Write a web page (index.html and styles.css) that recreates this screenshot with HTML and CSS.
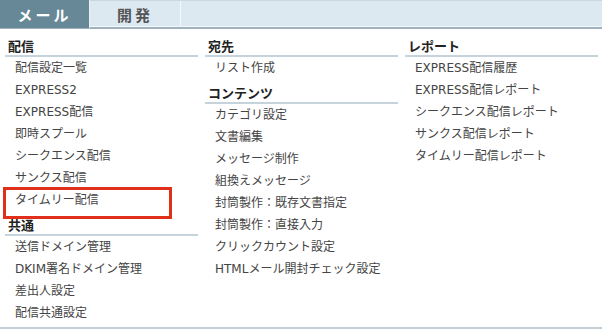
FILE: index.html
```html
<!DOCTYPE html>
<html lang="ja">
<head>
    <meta charset="UTF-8">
    <title>メニュー</title>
    <link rel="stylesheet" href="styles.css">
</head>
<body>
    <!-- Tabs -->
    <div class="tabs">
        <div class="tab active">メール</div>
        <div class="tab">開発</div>
    </div>

    <!-- Menu columns -->
    <div class="menu">
        <div class="column">
            <div class="heading">配信</div>
            <ul>
                <li>配信設定一覧</li>
                <li>EXPRESS2</li>
                <li>EXPRESS配信</li>
                <li>即時スプール</li>
                <li>シークエンス配信</li>
                <li>サンクス配信</li>
                <li class="marked">タイムリー配信</li>
            </ul>
            <div class="heading">共通</div>
            <ul>
                <li>送信ドメイン管理</li>
                <li>DKIM署名ドメイン管理</li>
                <li>差出人設定</li>
                <li>配信共通設定</li>
            </ul>
        </div>

        <div class="column">
            <div class="heading">宛先</div>
            <ul>
                <li>リスト作成</li>
            </ul>
            <div class="heading">コンテンツ</div>
            <ul>
                <li>カテゴリ設定</li>
                <li>文書編集</li>
                <li>メッセージ制作</li>
                <li>組換えメッセージ</li>
                <li>封筒製作：既存文書指定</li>
                <li>封筒製作：直接入力</li>
                <li>クリックカウント設定</li>
                <li>HTMLメール開封チェック設定</li>
            </ul>
        </div>

        <div class="column">
            <div class="heading">レポート</div>
            <ul>
                <li>EXPRESS配信履歴</li>
                <li>EXPRESS配信レポート</li>
                <li>シークエンス配信レポート</li>
                <li>サンクス配信レポート</li>
                <li>タイムリー配信レポート</li>
            </ul>
        </div>
    </div>
</body>
</html>
```

FILE: styles.css
```css
/* Basic Reset */
* {
    margin: 0;
    padding: 0;
    box-sizing: border-box;
}

body {
    font-family: "DejaVu Sans", "Noto Sans CJK JP", sans-serif;
    font-size: 12px;
    color: #444;
    background-color: white;
    width: 602px;
    height: 331px;
    overflow: hidden;
}

/* Tab bar */
.tabs {
    display: flex;
    height: 29px;
    background-color: #dce9f1;
    border-top: 1px solid #c8d9e2;
    border-bottom: 2px solid #9fb2bd;
    box-shadow: inset 0 -1px 0 #f2f7fa;
}

.tab {
    width: 91px;
    display: flex;
    justify-content: center;
    align-items: center;
    font-family: "Noto Sans CJK JP", sans-serif;
    font-size: 15px;
    font-weight: bold;
    letter-spacing: 3px;
    color: #555;
    border-right: 1px solid #f4f8fb;
}

.tab.active {
    width: 90px;
    background-color: #668897;
    color: white;
    border-right: 1px solid #e9f1f5;
    margin-top: -1px;
    margin-bottom: -1px;
}

/* Menu */
.menu {
    display: grid;
    grid-template-columns: 193px 193px 193px;
    gap: 7px;
    padding: 5px 4px 0 5px;
    height: 300px;
    border-bottom: 2px solid #c3ced5;
}

.heading {
    font-family: "Noto Sans CJK JP", sans-serif;
    font-size: 13px;
    font-weight: bold;
    color: #222;
    padding: 2px 0 0 3px;
    height: 23px;
    line-height: 20px;
    border-bottom: 2px solid #c4d3dc;
}

ul + .heading {
    margin-top: 2px;
}

ul {
    list-style: none;
}

li {
    height: 22px;
    line-height: 22px;
    padding-left: 10px;
    white-space: nowrap;
    position: relative;
}

/* Red annotation box */
.marked::after {
    content: "";
    position: absolute;
    left: -2px;
    top: -2px;
    width: 163px;
    height: 26px;
    border: 3px solid #e0301c;
}
```
